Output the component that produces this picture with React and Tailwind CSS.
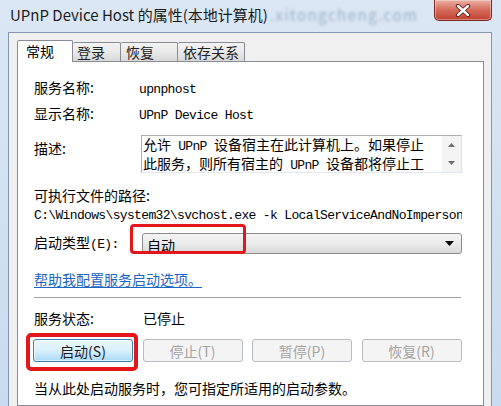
import React from "react";

const L = ({ children }) => (
  <span className="font-['Liberation_Mono',monospace] text-[13px] tracking-[-0.65px]">{children}</span>
);

function CloseButton() {
  return (
    <div className="w-[58px] h-[21px] rounded-b-[5px] border border-t-0 border-[#7a2a20] bg-gradient-to-b from-[#eab0a4] via-[#d46a5b] to-[#c2402f] flex items-center justify-center shadow-[inset_0_0_0_1px_rgba(255,255,255,0.35)]">
      <svg width="16" height="13" viewBox="0 0 16 13">
        <path d="M3 2 L13 11 M13 2 L3 11" stroke="#5a1a12" strokeWidth="4.2" strokeLinecap="round" />
        <path d="M3 2 L13 11 M13 2 L3 11" stroke="#ffffff" strokeWidth="2.4" strokeLinecap="round" />
      </svg>
    </div>
  );
}

function Tab({ label, active, w, pl }) {
  if (active) {
    return (
      <div
        className="h-[22px] -mb-px relative z-10 bg-white border border-b-0 border-[#898c95] rounded-t-[2px] text-[14px] leading-[16px] pt-[2px]"
        style={{ width: w, paddingLeft: pl }}
      >
        {label}
      </div>
    );
  }
  return (
    <div
      className="h-[19px] bg-gradient-to-b from-[#f3f3f3] via-[#e9e9e9] to-[#d9d9d9] border border-b-0 border-l-0 border-[#898c95] rounded-t-[2px] text-[14px] leading-[16px] pt-px text-[#222]"
      style={{ width: w, paddingLeft: pl }}
    >
      {label}
    </div>
  );
}

function Btn({ children, primary }) {
  if (primary) {
    return (
      <div className="w-[100px] h-[23px] rounded-[3px] border border-[#3c7fb1] bg-gradient-to-b from-[#eaf6fd] via-[#d9f0fc] to-[#a9daf5] flex items-center justify-center text-[14px] leading-[16px] text-[#1a1a1a] shadow-[inset_0_0_0_1px_rgba(255,255,255,0.6)]">
        {children}
      </div>
    );
  }
  return (
    <div className="w-[100px] h-[23px] rounded-[3px] border border-[#b8bcbf] bg-[#f4f4f4] flex items-center justify-center text-[14px] leading-[16px] text-[#a3a3a3]">
      {children}
    </div>
  );
}

export default function App() {
  return (
    <div className="w-[501px] h-[406px] overflow-hidden relative bg-gradient-to-b from-[#dbe7f4] to-[#c9dbee] font-['Noto_Sans_CJK_SC',sans-serif] text-[14px] leading-[16px] text-black flex flex-col">
      {/* title bar */}
      <div className="h-[32px] shrink-0 flex items-start">
        <div className="pl-[10px] pt-[6px] text-[15px] leading-[18px] text-[#1b1b1b] whitespace-nowrap">
          UPnP Device Host 的属性(本地计算机)
        </div>
        <div className="ml-[2px] pt-[6px] text-[15px] leading-[18px] tracking-[1.5px] text-[#9bb0c7] blur-[1.4px] whitespace-nowrap">
          .xitongcheng.com
        </div>
        <div className="ml-auto mr-[9px]">
          <CloseButton />
        </div>
      </div>

      {/* client area */}
      <div className="flex-1 ml-[8px] mr-[9px] border-l border-t border-r border-[#8497b0] bg-[#f0f0f0] pl-[8px] pr-[7px] pt-[7px] flex flex-col">
        {/* tabs */}
        <div className="flex items-end h-[21px]">
          <Tab label="常规" active w={56} pl={8} />
          <Tab label="登录" w={48} pl={4} />
          <Tab label="恢复" w={57} pl={5} />
          <Tab label="依存关系" w={67} pl={5} />
        </div>

        {/* tab page */}
        <div className="flex-1 bg-white border border-[#898c95] pl-[16px] flex flex-col">
          <div className="mt-[17px] flex h-[16px]">
            <div className="w-[105px]">服务名称:</div>
            <div><L>upnphost</L></div>
          </div>
          <div className="mt-[10px] flex h-[16px]">
            <div className="w-[105px]">显示名称:</div>
            <div><L>UPnP Device Host</L></div>
          </div>
          <div className="mt-[14px] flex items-start">
            <div className="w-[105px] pt-[5px]">描述:</div>
            <div className="ml-[2px] w-[321px] h-[38px] border border-[#abadb3] border-r-[#dfe3e8] border-b-[#e3e9ef] flex">
              <div className="flex-1 pl-[1px] whitespace-nowrap text-[14px] leading-[16px]">
                <div>允许<L> UPnP </L>设备宿主在此计算机上。如果停止</div>
                <div>此服务，则所有宿主的<L> UPnP </L>设备都将停止工</div>
              </div>
              <div className="w-[19px] bg-[#f4f4f4] flex flex-col items-center justify-between py-[7px]">
                <svg width="7" height="4" viewBox="0 0 7 4"><path d="M0 4 L3.5 0 L7 4 Z" fill="#6d6d6d" /></svg>
                <svg width="7" height="4" viewBox="0 0 7 4"><path d="M0 0 L3.5 4 L7 0 Z" fill="#6d6d6d" /></svg>
              </div>
            </div>
          </div>
          <div className="mt-[14px] h-[16px]">可执行文件的路径:</div>
          <div className="mt-[2px] h-[16px] w-[428px] overflow-x-clip whitespace-nowrap">
            <L>C:\Windows\system32\svchost.exe -k LocalServiceAndNoImpersonation</L>
          </div>
          <div className="mt-[12px] flex items-center h-[21px]">
            <div className="w-[105px] whitespace-nowrap">启动类型<L>(E):</L></div>
            <div className="ml-[3px] w-[320px] h-[21px] rounded-[3px] border border-[#8d8d8d] bg-gradient-to-b from-[#f4f4f4] via-[#ebebeb] to-[#d8d8d8] flex items-center pl-[4px] pr-[7px]">
              <div className="flex-1 pt-[2px]">自动</div>
              <svg width="9" height="5" viewBox="0 0 9 5"><path d="M0 0 L9 0 L4.5 5 Z" fill="#000" /></svg>
            </div>
          </div>
          <div className="mt-[17px] h-[16px]">
            <span className="text-[#1a66c2] underline underline-offset-[2px]">帮助我配置服务启动选项。</span>
          </div>
          <div className="mt-[10px] w-[427px] border-t border-[#a0a0a0] border-b border-b-white" />
          <div className="mt-[11px] flex h-[16px]">
            <div className="w-[109px]">服务状态:</div>
            <div>已停止</div>
          </div>
          <div className="mt-[13px] -ml-px flex gap-[9.5px]">
            <Btn primary>启动(S)</Btn>
            <Btn>停止(T)</Btn>
            <Btn>暂停(P)</Btn>
            <Btn>恢复(R)</Btn>
          </div>
          <div className="mt-[18px] h-[16px] whitespace-nowrap">当从此处启动服务时，您可指定所适用的启动参数。</div>
        </div>
      </div>

      {/* red annotation boxes */}
      <div className="absolute left-[130px] top-[224px] w-[116px] h-[30px] border-[3px] border-[#e3161b] rounded-[4px]" />
      <div className="absolute left-[26px] top-[333px] w-[112px] h-[38px] border-[4px] border-[#e3161b] rounded-[5px]" />
    </div>
  );
}
